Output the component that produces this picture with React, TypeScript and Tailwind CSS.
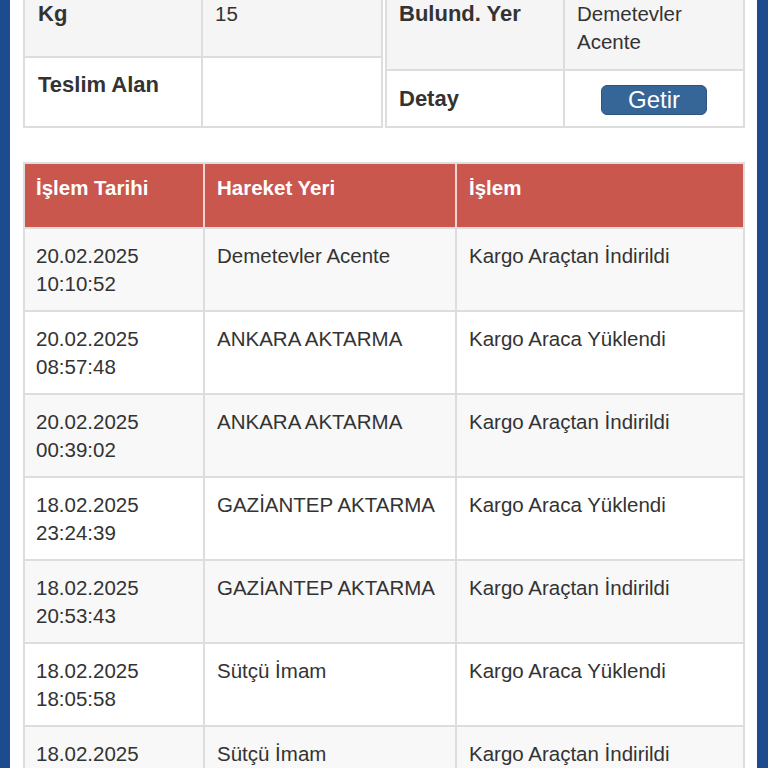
const hareketler = [
  { tarih: "20.02.2025", saat: "10:10:52", yer: "Demetevler Acente", islem: "Kargo Araçtan İndirildi" },
  { tarih: "20.02.2025", saat: "08:57:48", yer: "ANKARA AKTARMA", islem: "Kargo Araca Yüklendi" },
  { tarih: "20.02.2025", saat: "00:39:02", yer: "ANKARA AKTARMA", islem: "Kargo Araçtan İndirildi" },
  { tarih: "18.02.2025", saat: "23:24:39", yer: "GAZİANTEP AKTARMA", islem: "Kargo Araca Yüklendi" },
  { tarih: "18.02.2025", saat: "20:53:43", yer: "GAZİANTEP AKTARMA", islem: "Kargo Araçtan İndirildi" },
  { tarih: "18.02.2025", saat: "18:05:58", yer: "Sütçü İmam", islem: "Kargo Araca Yüklendi" },
  { tarih: "18.02.2025", saat: "17:42:10", yer: "Sütçü İmam", islem: "Kargo Araçtan İndirildi" },
]

export default function App() {
  return (
    <div
      className="flex h-[768px] overflow-hidden bg-white text-[#333] leading-[28px]"
      style={{ fontFamily: '"Liberation Sans", Arial, sans-serif' }}
    >
      <div className="w-[10px] shrink-0 bg-[#1e4b8e]" />

      <div className="flex-1 pl-[13px] pr-[12px]">
        {/* gönderi bilgileri */}
        <div className="-mt-[15px] grid grid-cols-2 gap-[2px]">
          <div className="border-2 border-[#dddddd]">
            <div className="grid h-[71px] grid-cols-2 border-b-2 border-[#dddddd] bg-[#f5f5f5]">
              <div className="border-r-2 border-[#dddddd] px-[13px] pt-[13px] text-[22px] font-bold">Kg</div>
              <div className="px-[12px] pt-[13px] text-[20.5px]">15</div>
            </div>
            <div className="grid h-[68px] grid-cols-2 bg-white">
              <div className="border-r-2 border-[#dddddd] px-[13px] pt-[13px] text-[22px] font-bold">Teslim Alan</div>
              <div className="px-[12px] pt-[13px] text-[20.5px]"></div>
            </div>
          </div>

          <div className="border-2 border-[#dddddd]">
            <div className="grid h-[84px] grid-cols-2 border-b-2 border-[#dddddd] bg-[#f5f5f5]">
              <div className="border-r-2 border-[#dddddd] px-[12px] pt-[13px] text-[22px] font-bold">Bulund. Yer</div>
              <div className="px-[12px] pt-[13px] text-[20.5px]">
                Demetevler
                <br />
                Acente
              </div>
            </div>
            <div className="grid h-[55px] grid-cols-2 bg-white">
              <div className="border-r-2 border-[#dddddd] px-[12px] pt-[14px] text-[22px] font-bold">Detay</div>
              <div className="flex justify-center pt-[14px]">
                <button className="h-[30px] w-[106px] rounded-[6px] border border-[#2b5384] bg-[#366597] text-[24px] leading-[28px] text-white">
                  Getir
                </button>
              </div>
            </div>
          </div>
        </div>

        {/* hareket tablosu */}
        <div className="mt-[34px] border-2 border-b-0 border-[#dddddd]">
          <div className="grid h-[63px] grid-cols-[180px_252px_1fr] bg-[#c9574e] text-[20.5px] font-bold text-white">
            <div className="border-r-2 border-[#f1d3cf] px-[11px] pt-[10px]">İşlem Tarihi</div>
            <div className="border-r-2 border-[#f1d3cf] px-[12px] pt-[10px]">Hareket Yeri</div>
            <div className="px-[12px] pt-[10px]">İşlem</div>
          </div>

          {hareketler.map((h, i) => (
            <div
              key={i}
              className={
                "grid h-[83px] grid-cols-[180px_252px_1fr] border-t-2 border-[#dddddd] text-[20.5px] " +
                (i % 2 === 0 ? "bg-[#f8f8f8]" : "bg-white")
              }
            >
              <div className="border-r-2 border-[#dddddd] px-[11px] pt-[13px]">
                {h.tarih}
                <br />
                {h.saat}
              </div>
              <div className="border-r-2 border-[#dddddd] px-[12px] pt-[13px]">{h.yer}</div>
              <div className="px-[12px] pt-[13px]">{h.islem}</div>
            </div>
          ))}
        </div>
      </div>

      <div className="w-[11px] shrink-0 bg-[#1e4b8e]" />
    </div>
  )
}
